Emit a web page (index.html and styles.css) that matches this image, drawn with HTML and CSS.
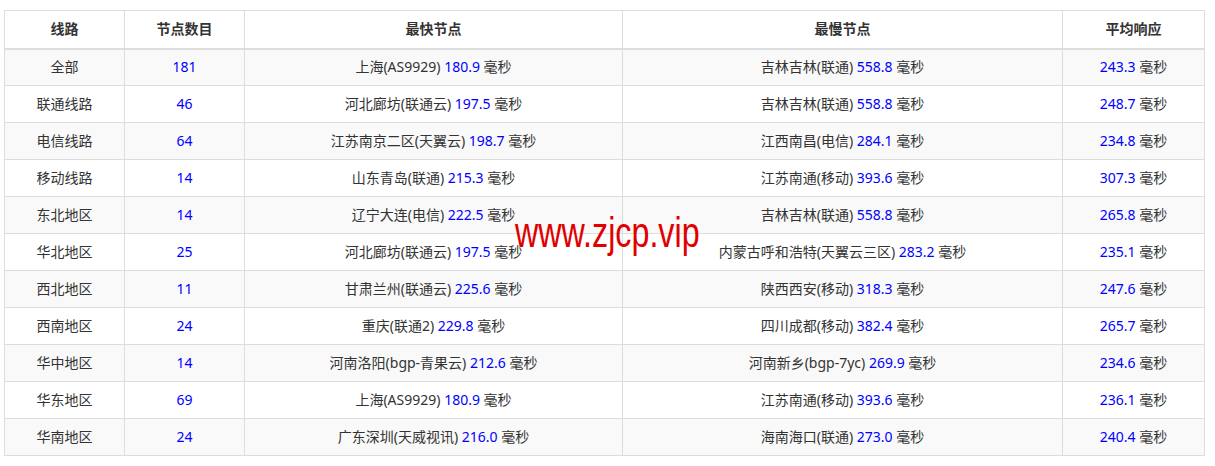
FILE: index.html
```html
<!DOCTYPE html>
<html lang="zh-CN">
<head>
<meta charset="utf-8">
<title>线路节点统计</title>
<link rel="stylesheet" href="styles.css">
</head>
<body>
<div class="wrap">
<table class="stats">
<colgroup>
<col class="c1"><col class="c2"><col class="c3"><col class="c4"><col class="c5">
</colgroup>
<thead>
<tr><th>线路</th><th>节点数目</th><th>最快节点</th><th>最慢节点</th><th>平均响应</th></tr>
</thead>
<tbody>
<tr><td>全部</td><td><span class="v">181</span></td><td>上海(AS9929) <span class="v">180.9</span> 毫秒</td><td>吉林吉林(联通) <span class="v">558.8</span> 毫秒</td><td><span class="v">243.3</span> 毫秒</td></tr>
<tr><td>联通线路</td><td><span class="v">46</span></td><td>河北廊坊(联通云) <span class="v">197.5</span> 毫秒</td><td>吉林吉林(联通) <span class="v">558.8</span> 毫秒</td><td><span class="v">248.7</span> 毫秒</td></tr>
<tr><td>电信线路</td><td><span class="v">64</span></td><td>江苏南京二区(天翼云) <span class="v">198.7</span> 毫秒</td><td>江西南昌(电信) <span class="v">284.1</span> 毫秒</td><td><span class="v">234.8</span> 毫秒</td></tr>
<tr><td>移动线路</td><td><span class="v">14</span></td><td>山东青岛(联通) <span class="v">215.3</span> 毫秒</td><td>江苏南通(移动) <span class="v">393.6</span> 毫秒</td><td><span class="v">307.3</span> 毫秒</td></tr>
<tr><td>东北地区</td><td><span class="v">14</span></td><td>辽宁大连(电信) <span class="v">222.5</span> 毫秒</td><td>吉林吉林(联通) <span class="v">558.8</span> 毫秒</td><td><span class="v">265.8</span> 毫秒</td></tr>
<tr><td>华北地区</td><td><span class="v">25</span></td><td>河北廊坊(联通云) <span class="v">197.5</span> 毫秒</td><td>内蒙古呼和浩特(天翼云三区) <span class="v">283.2</span> 毫秒</td><td><span class="v">235.1</span> 毫秒</td></tr>
<tr><td>西北地区</td><td><span class="v">11</span></td><td>甘肃兰州(联通云) <span class="v">225.6</span> 毫秒</td><td>陕西西安(移动) <span class="v">318.3</span> 毫秒</td><td><span class="v">247.6</span> 毫秒</td></tr>
<tr><td>西南地区</td><td><span class="v">24</span></td><td>重庆(联通2) <span class="v">229.8</span> 毫秒</td><td>四川成都(移动) <span class="v">382.4</span> 毫秒</td><td><span class="v">265.7</span> 毫秒</td></tr>
<tr><td>华中地区</td><td><span class="v">14</span></td><td>河南洛阳(bgp-青果云) <span class="v">212.6</span> 毫秒</td><td>河南新乡(bgp-7yc) <span class="v">269.9</span> 毫秒</td><td><span class="v">234.6</span> 毫秒</td></tr>
<tr><td>华东地区</td><td><span class="v">69</span></td><td>上海(AS9929) <span class="v">180.9</span> 毫秒</td><td>江苏南通(移动) <span class="v">393.6</span> 毫秒</td><td><span class="v">236.1</span> 毫秒</td></tr>
<tr><td>华南地区</td><td><span class="v">24</span></td><td>广东深圳(天威视讯) <span class="v">216.0</span> 毫秒</td><td>海南海口(联通) <span class="v">273.0</span> 毫秒</td><td><span class="v">240.4</span> 毫秒</td></tr>
</tbody>
</table>
<div class="watermark">www.zjcp.vip</div>
</div>
</body>
</html>
```

FILE: styles.css
```css
html, body {
  margin: 0;
  padding: 0;
  background: #fff;
}

body {
  font-family: "Noto Sans", "Noto Sans CJK SC", sans-serif;
  font-size: 14px;
  color: #333;
}

.wrap {
  position: relative;
  padding: 10px 0 0 4px;
}

.stats {
  border-collapse: collapse;
  table-layout: fixed;
  width: 1200px;
}

.c1 { width: 120px; }
.c2 { width: 120px; }
.c3 { width: 378px; }
.c4 { width: 440px; }
.c5 { width: 142px; }

.stats th,
.stats td {
  border: 1px solid #ddd;
  text-align: center;
  vertical-align: middle;
  padding: 0 8px;
  line-height: 20px;
  box-sizing: border-box;
  white-space: nowrap;
}

.stats th {
  font-weight: bold;
  border-bottom: 2px solid #ddd;
  height: 38px;
}

.stats td {
  height: 37px;
}

.stats tbody tr:nth-child(odd) {
  background: #f9f9f9;
}

.v {
  color: #0000ff;
}

.watermark {
  position: absolute;
  left: 515px;
  top: 211px;
  font-family: "Liberation Sans", sans-serif;
  font-size: 43px;
  line-height: 43px;
  color: #e00000;
  transform: scaleX(0.75);
  transform-origin: left top;
  white-space: nowrap;
}
```
